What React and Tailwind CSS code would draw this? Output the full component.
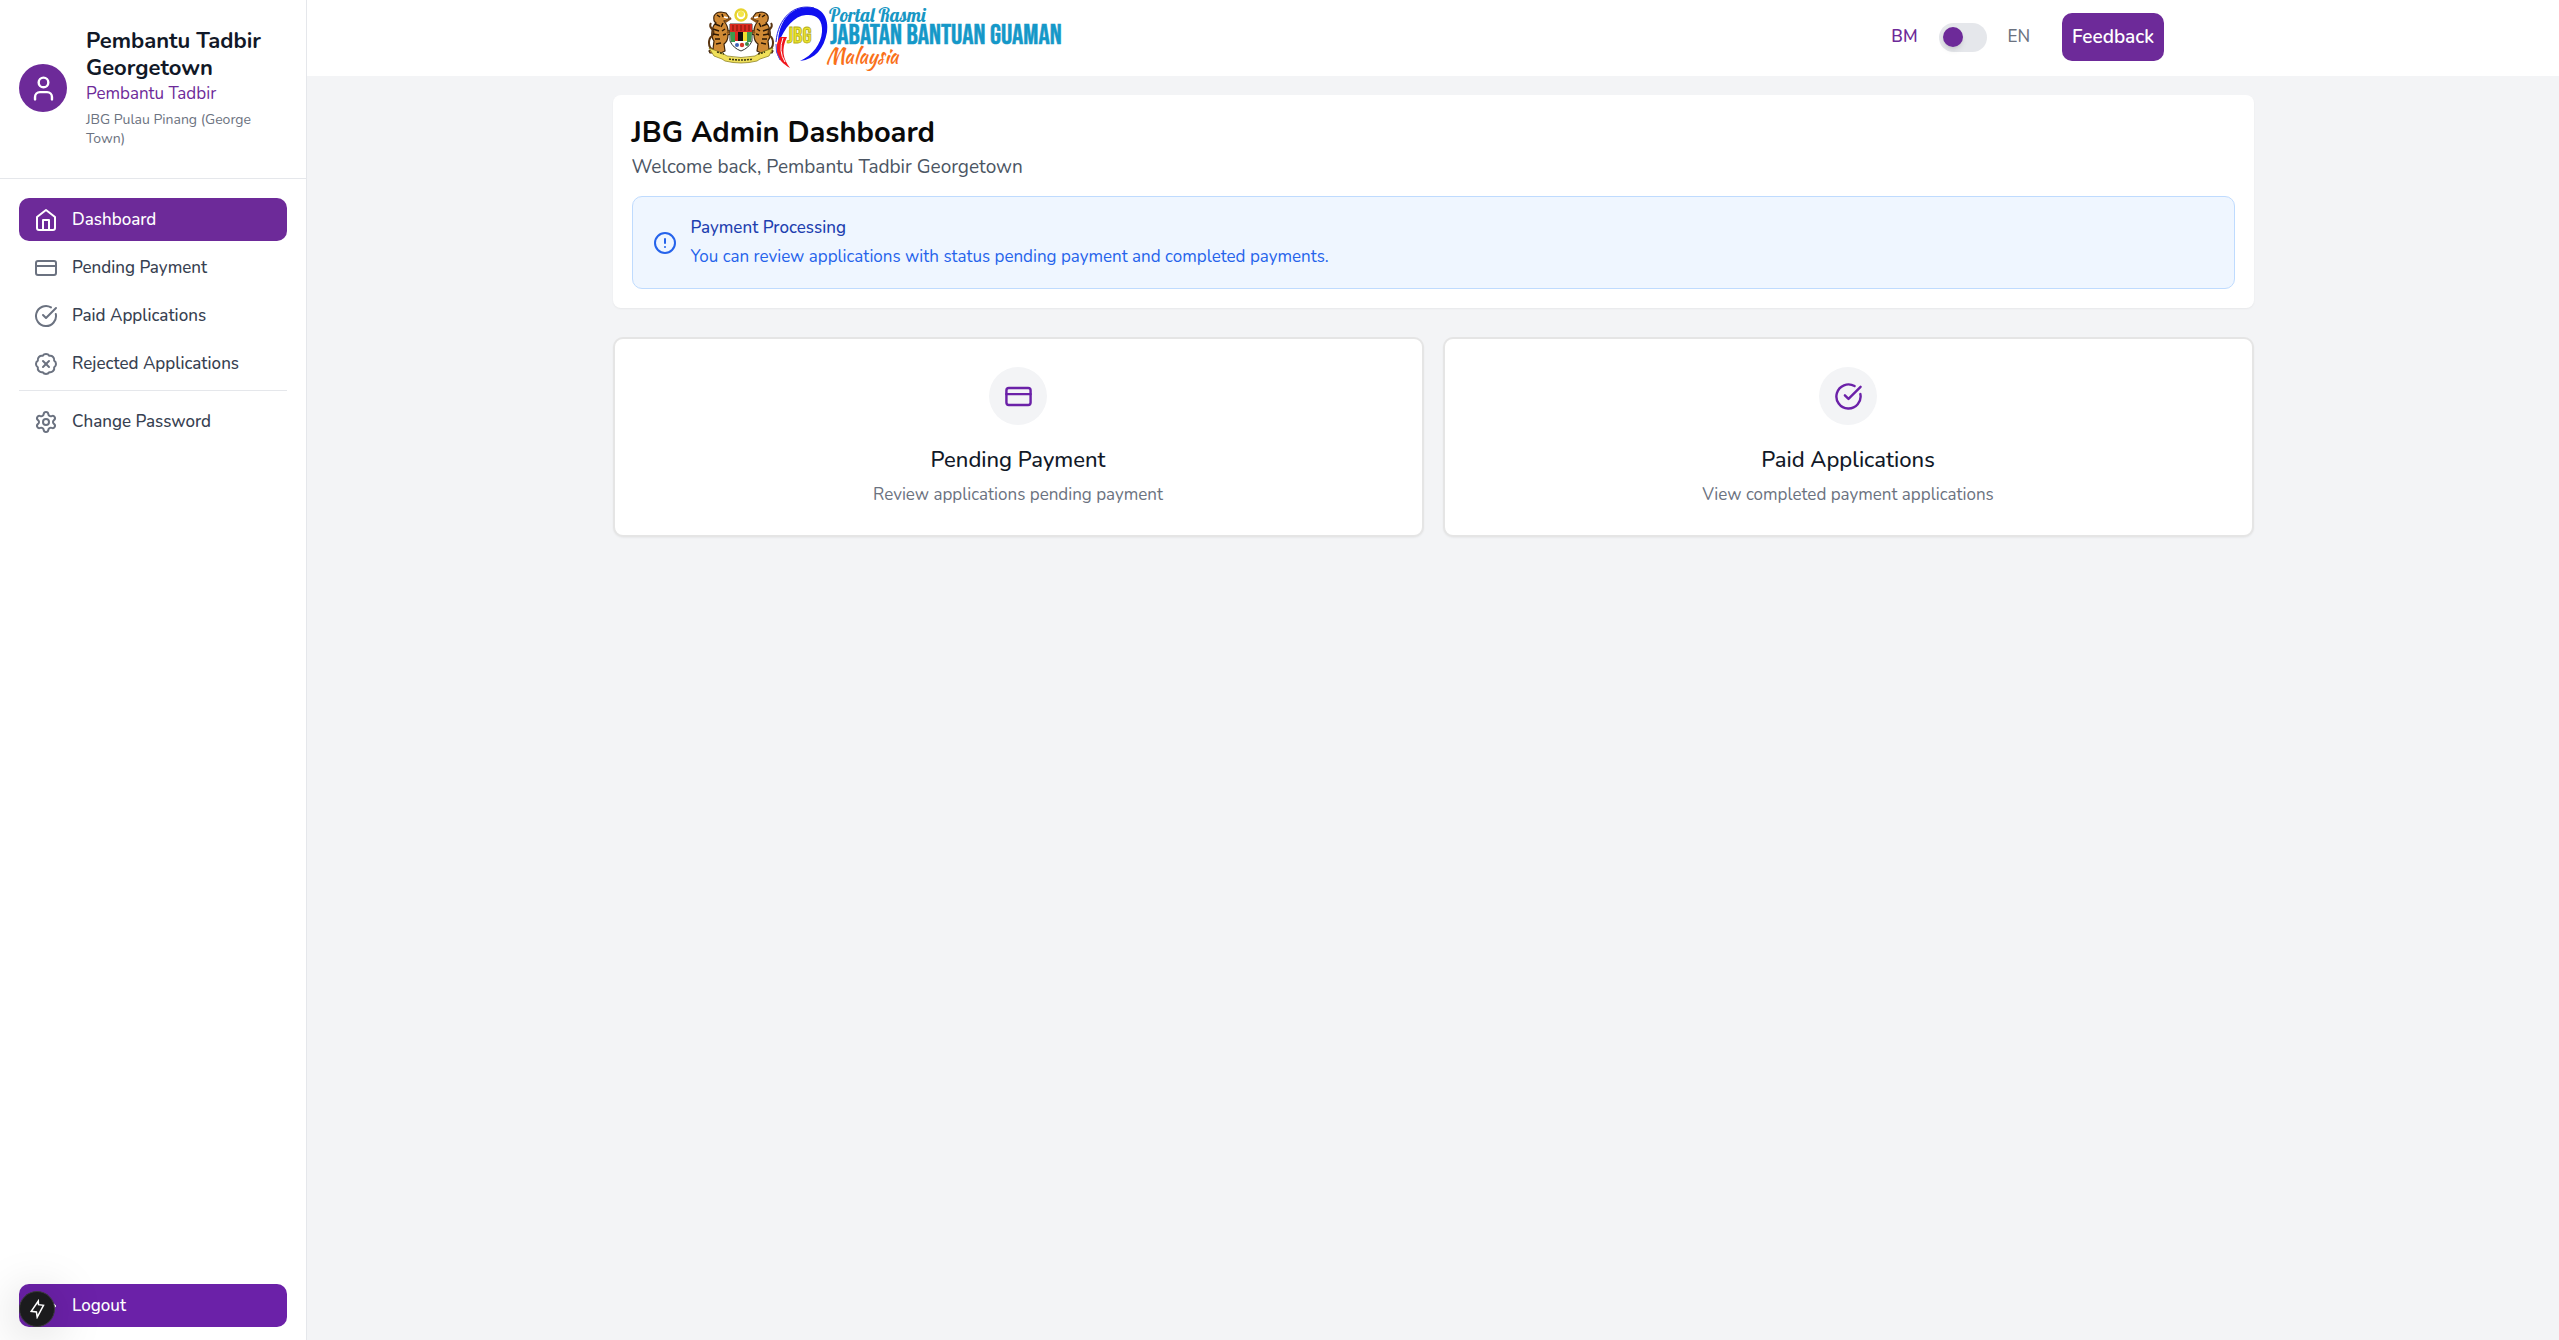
import { useState } from "react";
import { BadgeX, CircleAlert, CircleCheckBig, CreditCard, LogOut, Settings, User } from "lucide-react";

const HomeIcon = ({ className }) => (
  <svg className={className} viewBox="0 0 24 24" fill="none" stroke="currentColor" strokeWidth="2" strokeLinecap="round" strokeLinejoin="round">
    <path d="m3 9 9-7 9 7v11a2 2 0 0 1-2 2H5a2 2 0 0 1-2-2z" />
    <path d="M9 22V12h6v10" />
  </svg>
);

const menu = [
  { label: "Dashboard", icon: HomeIcon, active: true },
  { label: "Pending Payment", icon: CreditCard },
  { label: "Paid Applications", icon: CircleCheckBig },
  { label: "Rejected Applications", icon: BadgeX },
];

const cards = [
  { title: "Pending Payment", text: "Review applications pending payment", icon: CreditCard },
  { title: "Paid Applications", text: "View completed payment applications", icon: CircleCheckBig },
];

// One tiger supporter, drawn for the left side and mirrored for the right
function Tiger() {
  return (
    <g>
      <path d="M14 16q2-4 7-4l5 1 3 4-2 3-3 1q4 5 4 10l3-1 2 3-5 2q0 6-4 9l1 7-4 2H10l-1-2 4-2 1-8q-3-4-2-10 1-6 4-8-3-2-2-7z" fill="#d08a35" stroke="#3d2208" strokeWidth="1.2" />
      <path d="M14 50q-5-1-5-7 0-5 3-7 3-3 0-7-3-3-1-6" fill="none" stroke="#5a3512" strokeWidth="2" />
      <path d="m15 24 5 2M13 29l6 2M13 34l6 1M15 39l5 0M16 44l5-1M23 23l-2 4M25 29l-3 2M26 34l-3 1M17 15l3 2M22 14l1 3" stroke="#2b1805" strokeWidth="1.5" />
      <path d="m24 17 4 1" stroke="#fff" strokeWidth="1.5" />
      <path d="m25 22 6-4M27 33l5-3" stroke="#8a5318" strokeWidth="2.5" />
    </g>
  );
}

function Crest() {
  return (
    <g transform="translate(-2 0)">
      <Tiger />
      <g transform="matrix(-1 0 0 1 82 0)">
        <Tiger />
      </g>
      <circle cx="41" cy="15" r="5.5" fill="#fff" stroke="#e8d42e" strokeWidth="2.5" />
      <circle cx="41" cy="14" r="3" fill="#f4e64a" />
      <path d="M30 24h22v17q-3 7-11 10-8-3-11-10z" fill="#fff" stroke="#333" />
      <path d="M30 24h22v8H30z" fill="#d92a20" />
      <path d="M33 25v6M37 25v6M41 25v6M45 25v6M49 25v6" stroke="#9c1d12" strokeWidth="1.5" />
      <path d="M30 32h5v10h-4z" fill="#3f9a4d" />
      <path d="M35 32h6v9h-6z" fill="#e02a22" />
      <path d="M38 32h5v9h-5z" fill="#111" />
      <path d="M43 32h4v9h-4z" fill="#f2df2f" />
      <path d="M47 32h5l-1 10h-4z" fill="#3f9a4d" />
      <circle cx="37" cy="45" r="2" fill="#3d62b5" />
      <circle cx="42" cy="45" r="2.2" fill="#d5362b" />
      <circle cx="47" cy="44" r="2" fill="#3d8a4a" />
      <path d="m9 48 8 3q6 2 10 5 14 3 28 0 4-3 10-5l8-3-4 8-9 3-3 2q-16 4-32 0l-3-2-8-3z" fill="#f0e05a" stroke="#8f8424" strokeWidth="0.8" />
      <path d="M17 52l7 2M58 54l7-2M29 59q12 2 24 0" fill="none" stroke="#3d3a12" strokeWidth="1.6" strokeDasharray="2 1" />
    </g>
  );
}

function Logo() {
  return (
    <svg viewBox="0 0 365 76" className="h-[76px] w-[365px]" role="img" aria-label="Portal Rasmi Jabatan Bantuan Guaman Malaysia">
      <Crest />
      <path d="M76 44C76 22 88 7 106 7c15 0 21 12 19 25-3 17-12 27-27 29 13-6 21-17 22-29 1-13-6-18-16-17-12 1-21 12-28 29z" fill="#1010f0" />
      <path d="M74 42C76 18 92 3 112 8" fill="none" stroke="#2020e0" />
      <path d="M78 37c-7 12-4 23 10 31-7-9-9-19-3-31z" fill="#f0161c" />
      <path d="M81 38q-5 13 2 24" fill="none" stroke="#fff" />
      <path d="M74 44q-1 8 4 16" fill="none" stroke="#5050e0" />
      <text x="85" y="43" className="font-['Bebas_Neue','Liberation_Sans',sans-serif] text-[23px]" fill="#eee62a" stroke="#b5ae20" strokeWidth="0.8">JBG</text>
      <text x="127" y="22" className="font-['Lobster','Liberation_Serif',serif] text-[19px]" fill="#1897c4">Portal Rasmi</text>
      <text x="128" y="44" className="font-['Bebas_Neue','Liberation_Sans',sans-serif] text-[28px]" fill="#1598c8" stroke="#1598c8" strokeWidth="0.5">JABATAN BANTUAN GUAMAN</text>
      <text x="124" y="63" className="font-['Kaushan_Script','Liberation_Serif',serif] text-[20px]" fill="#f9701a">Malaysia</text>
    </svg>
  );
}

function NavItem({ label, icon: Icon, active }) {
  return (
    <a
      href="#"
      className={`flex h-[43px] items-center gap-[14px] rounded-[10px] px-[15px] text-[17px] leading-6 font-medium ${
        active ? "bg-[#6d2a99] text-white" : "text-[#374151] hover:bg-gray-100"
      }`}
    >
      <Icon className={`size-6 shrink-0 ${active ? "text-white" : "text-[#6b7280]"}`} />
      {label}
    </a>
  );
}

export default function App() {
  const [english, setEnglish] = useState(false);

  return (
    <div className="flex min-h-screen bg-[#f3f4f6] font-['Nunito','Open_Sans',sans-serif]">
      <aside className="sticky top-0 flex h-screen w-[307px] shrink-0 flex-col border-r border-[#e5e7eb] bg-white">
        <div className="flex items-center gap-[19px] border-b border-[#e5e7eb] px-[19px] pt-7 pb-[30px]">
          <div className="flex size-12 shrink-0 items-center justify-center rounded-full bg-[#6d2a99] text-white">
            <User className="size-[29px]" />
          </div>
          <div>
            <h2 className="text-[22px] leading-[27px] font-bold text-[#111827]">Pembantu Tadbir Georgetown</h2>
            <p className="text-[17px] leading-6 text-[#6d2a99]">Pembantu Tadbir</p>
            <p className="mt-1 text-[14px] leading-[19px] text-[#6b7280]">JBG Pulau Pinang (George Town)</p>
          </div>
        </div>

        <nav className="flex flex-col gap-[5px] px-[19px] pt-[19px]">
          {menu.map((item) => (
            <NavItem key={item.label} {...item} />
          ))}
          <div className="border-t border-[#e5e7eb] pt-[9px]">
            <NavItem label="Change Password" icon={Settings} />
          </div>
        </nav>

        <div className="mt-auto px-[19px] pb-[13px]">
          <button className="flex h-[43px] w-full items-center gap-[14px] rounded-[10px] bg-[#6b21a8] px-[15px] text-[17px] leading-6 font-medium text-white">
            <LogOut className="size-6" />
            Logout
          </button>
        </div>
      </aside>

      <div className="min-w-0 flex-1">
        <header className="bg-white">
          <div className="mx-auto flex h-[76px] max-w-[1536px] items-center justify-between px-[37px]">
            <Logo />
            <div className="flex items-center pb-0.5 text-[17px]">
              <span className="font-semibold text-[#6d2a99]">BM</span>
              <button
                role="switch"
                aria-checked={english}
                aria-label="Language"
                onClick={() => setEnglish(!english)}
                className="mx-[21px] flex h-[29px] w-12 items-center rounded-full bg-[#e5e7eb] px-1"
              >
                <span className={`size-5 rounded-full bg-[#6d2a99] shadow-md ${english ? "ml-5" : ""}`} />
              </button>
              <span className="font-medium text-[#6b7280]">EN</span>
              <button className="ml-8 h-12 rounded-[10px] bg-[#6d2a99] px-[10px] text-[19px] font-semibold text-white">Feedback</button>
            </div>
          </div>
        </header>

        <main className="mx-auto max-w-[1641px] pt-[19px]">
          <section className="rounded-[8px] bg-white p-[19px] shadow-xs">
            <h1 className="text-[29px] leading-[38px] font-bold text-[#0a0a0a]">JBG Admin Dashboard</h1>
            <p className="text-[19px] leading-[30px] text-[#4b5563]">Welcome back, Pembantu Tadbir Georgetown</p>
            <div className="mt-[14px] flex items-center gap-[14px] rounded-[10px] border border-[#bfdbfe] bg-[#eff6ff] px-5 py-[19px] text-[17px] leading-6">
              <CircleAlert className="size-6 shrink-0 text-[#2563eb]" />
              <div>
                <h3 className="font-medium text-[#1e40af]">Payment Processing</h3>
                <p className="mt-[5px] text-[#2563eb]">You can review applications with status pending payment and completed payments.</p>
              </div>
            </div>
          </section>

          <div className="mt-[29px] grid grid-cols-2 gap-[19px]">
            {cards.map(({ title, text, icon: Icon }) => (
              <a key={title} href="#" className="flex flex-col items-center rounded-[10px] border-2 border-[#e5e5e5] bg-white p-7 shadow-xs">
                <div className="flex size-[58px] items-center justify-center rounded-full bg-[#f3f4f6]">
                  <Icon className="size-[29px] text-[#6b21a8]" />
                </div>
                <h3 className="mt-5 text-[22px] leading-[30px] font-medium text-[#111827]">{title}</h3>
                <p className="mt-2 text-[17px] leading-6 text-[#6b7280]">{text}</p>
              </a>
            ))}
          </div>
        </main>
      </div>

      <button
        aria-label="Open dev tools"
        className="fixed bottom-[13px] left-[19px] flex size-9 items-center justify-center rounded-full border border-[#3a3a3a] bg-[#1b1b1d] text-white shadow-[0_4px_48px_rgba(0,0,0,0.25)]"
      >
        <svg className="size-5" viewBox="0 0 20 20" fill="none" stroke="currentColor" strokeWidth="1.5">
          <path d="M11.3 2 4.2 12.3l5.2.7.8 5.2L16.5 6.3l-5-.6z" />
        </svg>
      </button>
    </div>
  );
}
